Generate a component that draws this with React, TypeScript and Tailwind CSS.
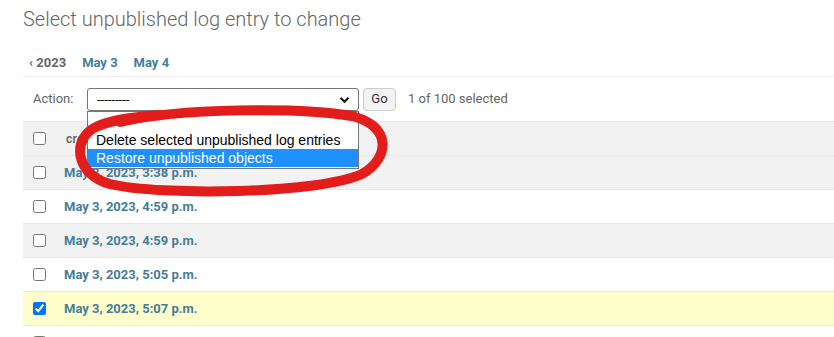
import { useState } from "react";

const ROWS = [
  { label: "May 3, 2023, 3:38 p.m.", checked: false },
  { label: "May 3, 2023, 4:59 p.m.", checked: false },
  { label: "May 3, 2023, 4:59 p.m.", checked: false },
  { label: "May 3, 2023, 5:05 p.m.", checked: false },
  { label: "May 3, 2023, 5:07 p.m.", checked: true },
  { label: "May 3, 2023, 5:12 p.m.", checked: false },
];

function rowBg(index: number, checked: boolean) {
  if (checked) return "bg-[#ffffcc]";
  return index % 2 === 0 ? "bg-[#f2f2f2]" : "bg-white";
}

function ActionSelect() {
  return (
    <div className="relative">
      <div className="flex h-[23px] w-[272px] items-center justify-between rounded-[3px] border border-[#767676] bg-white pl-[9px] pr-[8px] text-[13px] text-black">
        <span className="leading-none">---------</span>
        <svg width="11" height="8" viewBox="0 0 11 8" className="mt-[1px]">
          <path d="M1.5 1.8 L5.5 5.8 L9.5 1.8" fill="none" stroke="#111" strokeWidth="2" />
        </svg>
      </div>
      <ul className="absolute left-0 top-[23px] z-10 w-[272px] border border-[#767676] bg-white py-[1px] font-['Liberation_Sans',sans-serif] text-[14px] leading-[18px] text-black">
        <li className="px-[8px]">---------</li>
        <li className="px-[8px]">Delete selected unpublished log entries</li>
        <li className="bg-[#1e90ff] px-[8px] text-white">Restore unpublished objects</li>
      </ul>
    </div>
  );
}

export default function App() {
  const [rows] = useState(ROWS);

  return (
    <div className="relative h-[337px] w-[834px] overflow-hidden bg-white font-['Roboto',sans-serif] text-[#333]">
      <h1 className="pl-[23px] pt-[6px] text-[20px] font-light leading-[26px] text-[#666]">
        Select unpublished log entry to change
      </h1>

      <div className="ml-[23px] mt-[17px] flex h-[28px] items-center gap-[16px] border-b border-[#eeeeee] pl-[6px] text-[13px] font-bold">
        <span className="text-[#666]">‹ 2023</span>
        <span className="text-[#447e9b]">May 3</span>
        <span className="text-[#447e9b]">May 4</span>
      </div>

      <div className="ml-[23px] flex h-[44px] items-center pl-[10px] text-[13px] text-[#666]">
        <span className="w-[54px]">Action:</span>
        <ActionSelect />
        <button
          type="button"
          className="ml-[4px] h-[23px] w-[33px] rounded-[4px] border border-[#cccccc] bg-[#f3f3f3] text-[13px] text-[#333]"
        >
          Go
        </button>
        <span className="ml-[12px]">1 of 100 selected</span>
      </div>

      <table className="ml-[23px] w-[811px] border-collapse text-[13px]">
        <thead>
          <tr className="h-[34px] border-y border-[#e8e8e8] bg-[#f2f2f2]">
            <th className="w-[41px] pl-[10px] text-left align-middle">
              <input type="checkbox" className="m-0 block h-[13px] w-[13px]" />
            </th>
            <th className="pl-[2px] text-left text-[12px] font-semibold tracking-[0.3px] text-[#666]">
              created at
            </th>
          </tr>
        </thead>
        <tbody>
          {rows.map((row, index) => (
            <tr key={index} className={`h-[34px] border-b border-[#e8e8e8] ${rowBg(index, row.checked)}`}>
              <td className="pl-[10px] align-middle">
                <input type="checkbox" defaultChecked={row.checked} className="m-0 block h-[13px] w-[13px]" />
              </td>
              <td className="font-bold text-[#447e9b]">{row.label}</td>
            </tr>
          ))}
        </tbody>
      </table>

      <svg
        className="pointer-events-none absolute left-0 top-0 z-20"
        width="834"
        height="337"
        viewBox="0 0 834 337"
      >
        <path
          d="M 120 122 C 180 108, 300 107, 352 116 C 392 126, 390 158, 362 174 C 318 194, 160 196, 110 184 C 74 174, 72 138, 96 127 C 110 120, 140 116, 160 115"
          fill="none"
          stroke="#e31c1c"
          strokeWidth="10"
          strokeLinecap="round"
        />
      </svg>
    </div>
  );
}
